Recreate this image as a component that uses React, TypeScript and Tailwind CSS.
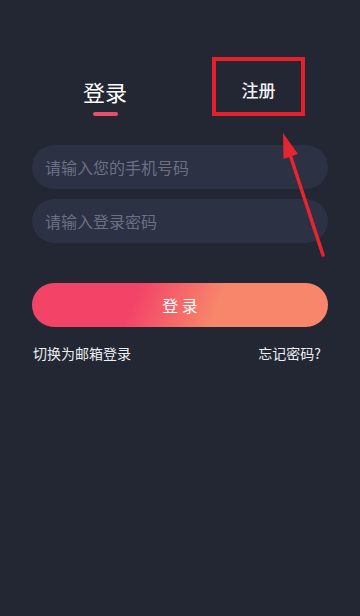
import React, { useState } from "react";

export default function App() {
  const [phone, setPhone] = useState("");
  const [password, setPassword] = useState("");

  return (
    <div className="relative min-h-[616px] w-full overflow-hidden bg-[#232733] font-['Noto_Sans_CJK_SC','Noto_Sans',sans-serif]">
      {/* tabs */}
      <div className="flex items-start pt-[57px] pl-[83px]">
        <div className="flex flex-col items-center pt-[23px]">
          <span className="text-[22px] leading-[22px] text-white">登录</span>
          <div className="mt-[10px] h-[4px] w-[25px] rounded-full bg-[#e8506a]" />
        </div>
        <div className="ml-[85px] flex h-[59px] w-[93px] items-center justify-center border-[4px] border-[#e6202b] pt-[6px]">
          <span className="text-[17px] leading-[17px] font-medium text-[#f3f4f6]">注册</span>
        </div>
      </div>

      {/* form */}
      <div className="mt-[29px] flex flex-col gap-[10px] px-[32px]">
        <input
          value={phone}
          onChange={(e) => setPhone(e.target.value)}
          placeholder="请输入您的手机号码"
          className="h-[44px] w-full rounded-full bg-[#2c3143] pl-[13px] text-[16px] text-white outline-none placeholder:text-[#6b7083]"
        />
        <input
          type="password"
          value={password}
          onChange={(e) => setPassword(e.target.value)}
          placeholder="请输入登录密码"
          className="h-[44px] w-full rounded-full bg-[#2c3143] pl-[13px] text-[16px] text-white outline-none placeholder:text-[#6b7083]"
        />

        <button
          type="button"
          className="mt-[30px] h-[44px] w-full rounded-full bg-linear-[112deg] from-[#f34468] from-35% to-[#f7866a] to-62% text-[16px] text-white"
        >
          登 录
        </button>

        <div className="mt-[6px] flex items-center justify-between pl-[1px] pr-[7px] text-[14px] leading-[20px] text-[#eceef2]">
          <span>切换为邮箱登录</span>
          <span>忘记密码?</span>
        </div>
      </div>

      {/* annotation arrow */}
      <svg
        className="pointer-events-none absolute left-0 top-0"
        width="360"
        height="616"
        viewBox="0 0 360 616"
      >
        <line x1="323" y1="255" x2="290.5" y2="156" stroke="#e5252f" strokeWidth="3.5" strokeLinecap="round" />
        <polygon points="283,133 298,154 283.5,159" fill="#e5252f" />
      </svg>
    </div>
  );
}
